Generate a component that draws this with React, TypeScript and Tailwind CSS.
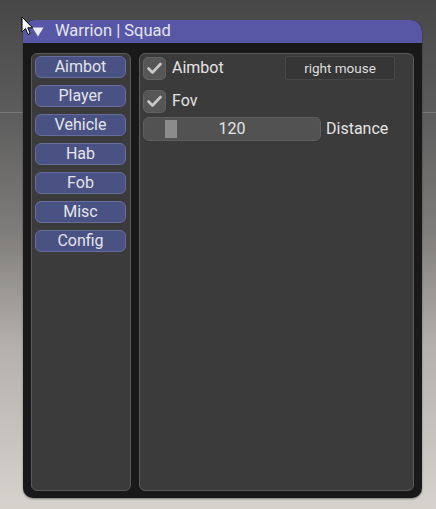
import React from "react";

const tabs = ["Aimbot", "Player", "Vehicle", "Hab", "Fob", "Misc", "Config"];

const Check = () => (
  <div className="w-[23px] h-[23px] rounded-[5px] bg-[#565656] border border-[#626262] flex items-center justify-center">
    <svg width="17" height="17" viewBox="0 0 17 17">
      <path d="M2.5 8.5 L6.5 12.5 L14.5 4" stroke="#c9c9c9" strokeWidth="2.6" fill="none" strokeLinecap="round" strokeLinejoin="round" />
    </svg>
  </div>
);

export default function App() {
  return (
    <div
      className="relative w-[436px] h-[509px] overflow-hidden bg-[linear-gradient(180deg,#474747_0%,#5c5c5c_22%,#7e7c7a_45%,#b4b1ac_68%,#d6d2cc_100%)]"
      style={{ fontFamily: "Roboto, 'Liberation Sans', sans-serif" }}
    >
      <div className="absolute left-0 right-0 top-[112px] h-px bg-[#8a8a8a]/60" />
      <div className="relative ml-[23px] mt-[20px] w-[399px] h-[478px] flex flex-col rounded-t-[12px] rounded-b-[10px] bg-[#191919] overflow-hidden shadow-[0_1px_2px_rgba(0,0,0,0.4)]">
        <div className="h-[23px] bg-[#5757a6] flex items-center pl-[9px] gap-[11px] text-[16.5px] text-[#e6e6f0]">
          <svg width="12" height="10" viewBox="0 0 12 10">
            <path d="M0.5 0.5 L11.5 0.5 L6 9.5 Z" fill="#ececf4" />
          </svg>
          <span>Warrion | Squad</span>
        </div>
        <div className="flex-1 flex gap-[8px] px-[8px] pt-[10px] pb-[7px]">
          <div className="w-[100px] bg-[#3b3b3b] border border-[#5a5a5a] rounded-[6px] flex flex-col gap-[7px] pl-[3px] pr-[4px] pt-[2px]">
            {tabs.map((t) => (
              <div
                key={t}
                className="h-[22px] rounded-[6px] bg-[#4a5284] border border-[#666c9c] flex items-center justify-center text-[16px] text-[#e4e4ea]"
              >
                {t}
              </div>
            ))}
          </div>
          <div className="flex-1 bg-[#3b3b3b] border border-[#5a5a5a] rounded-[6px] px-[3px] pt-[2px] flex flex-col text-[16px] text-[#e4e4e4]">
            <div className="flex items-center h-[24px]">
              <Check />
              <span className="ml-[6px] w-[113px]">Aimbot</span>
              <div className="w-[110px] h-[24px] bg-[#363636] border border-[#474747] rounded-[2px] flex items-center justify-center text-[13.5px] text-[#dedede]">
                right mouse
              </div>
            </div>
            <div className="flex items-center h-[24px] mt-[9px]">
              <Check />
              <span className="ml-[6px]">Fov</span>
            </div>
            <div className="flex items-center mt-[4px]">
              <div className="relative w-[178px] h-[24px] rounded-[6px] bg-[#525252] border border-[#5e5e5e] flex items-center justify-center">
                <div className="absolute left-[21px] top-[2px] w-[12px] h-[18px] bg-[#8b8b8b]" />
                <span className="relative">120</span>
              </div>
              <span className="ml-[5px]">Distance</span>
            </div>
          </div>
        </div>
      </div>
      <svg className="absolute left-[21px] top-[16px]" width="14" height="21" viewBox="0 0 14 21">
        <path d="M1 1 L1 16 L4.5 12.5 L7 18.5 L9.2 17.5 L6.8 11.8 L11.5 11.8 Z" fill="#ffffff" stroke="#000000" strokeWidth="1" strokeLinejoin="round" />
      </svg>
    </div>
  );
}
